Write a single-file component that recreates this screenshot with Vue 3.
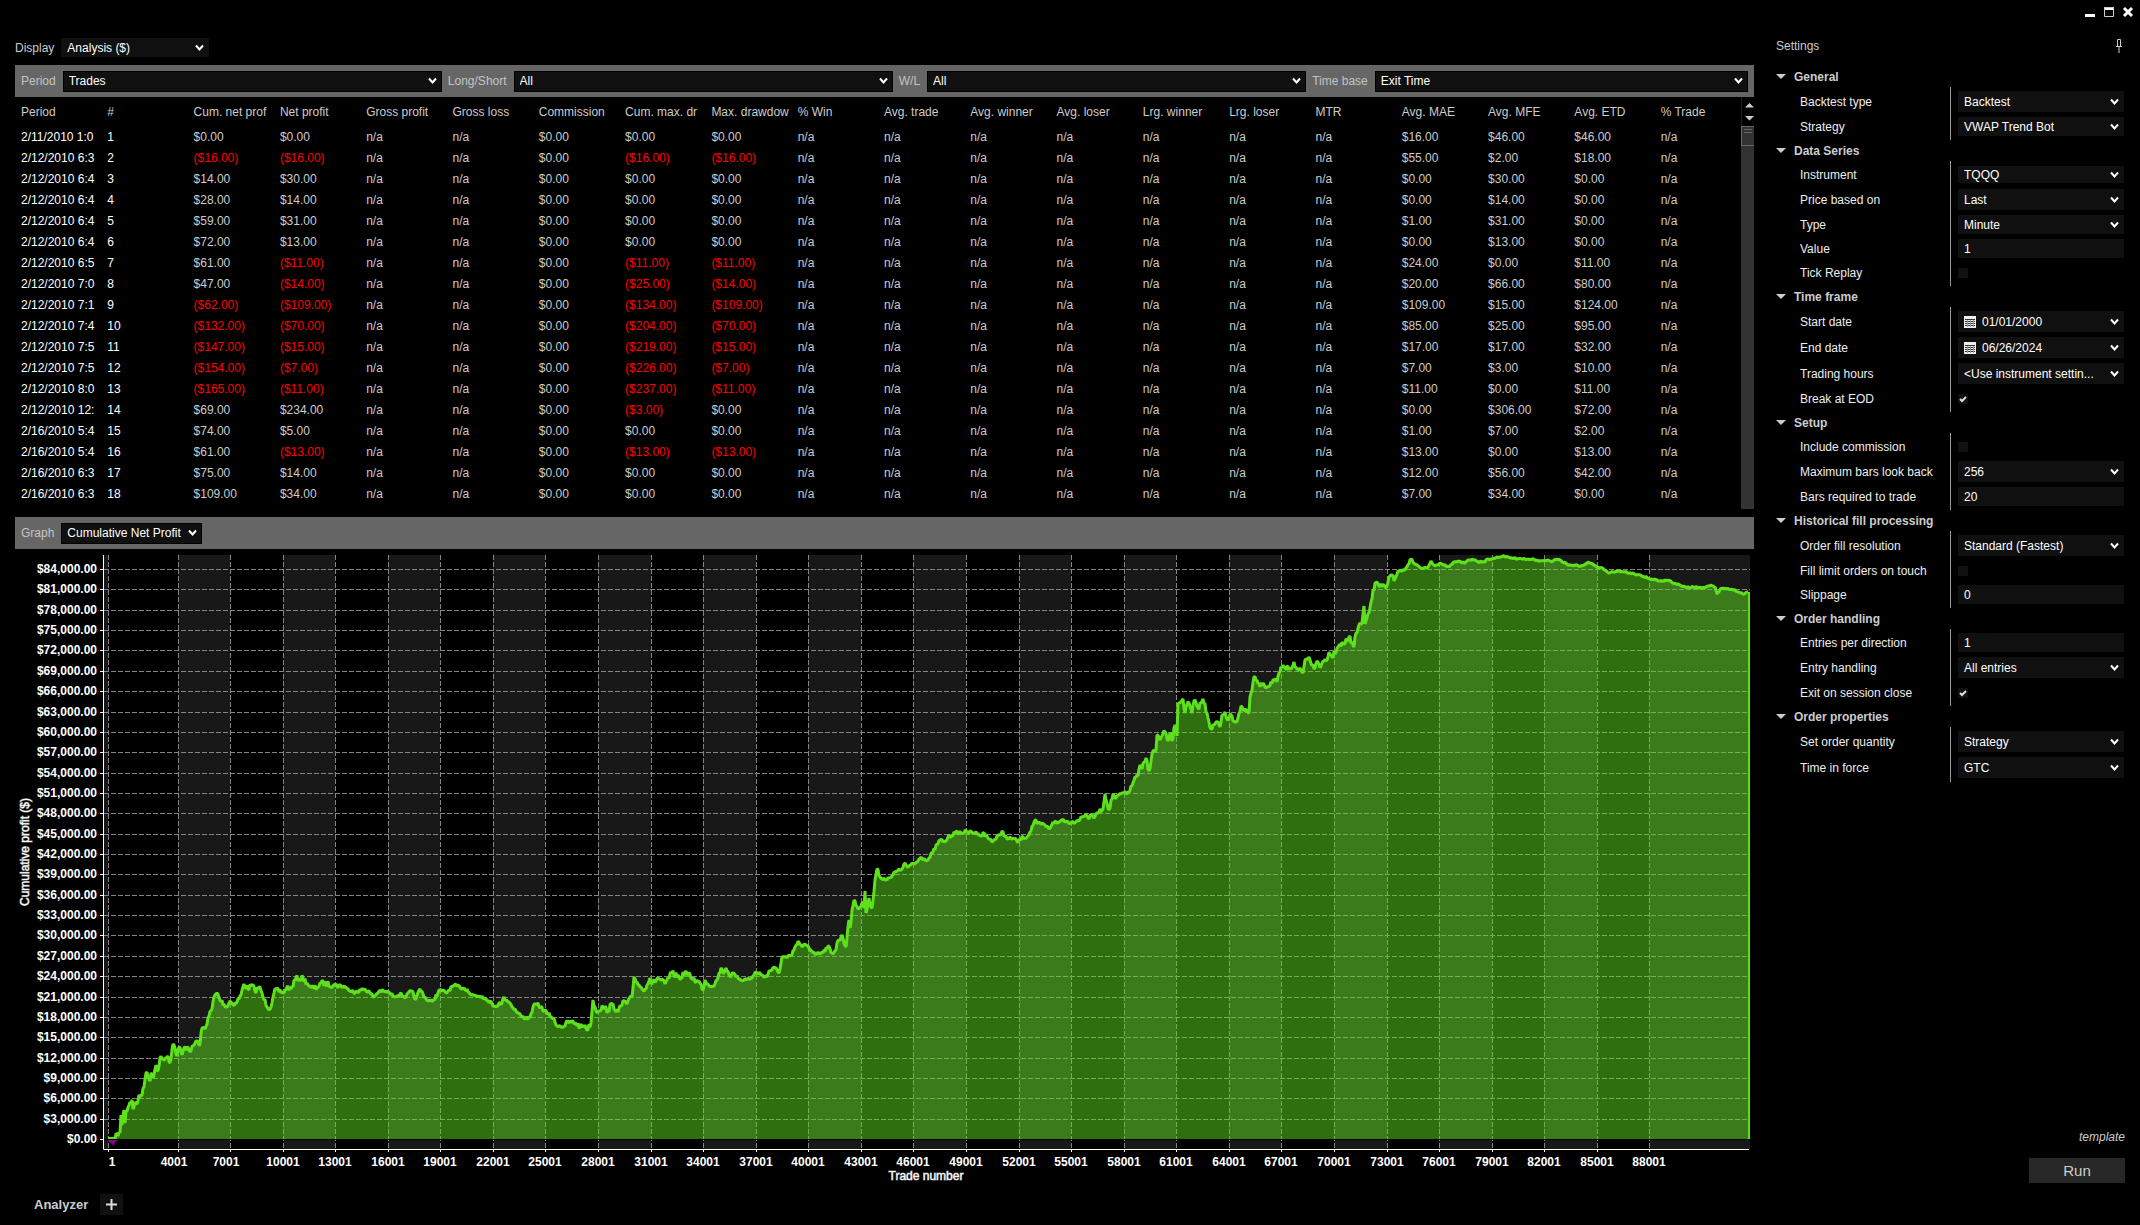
<script setup>
const toolbar = [
  { id: 'period', label: 'Period', value: 'Trades' },
  { id: 'side', label: 'Long/Short', value: 'All' },
  { id: 'wl', label: 'W/L', value: 'All' },
  { id: 'timebase', label: 'Time base', value: 'Exit Time' },
]

const columns = [
  'Period', '#', 'Cum. net prof', 'Net profit', 'Gross profit', 'Gross loss', 'Commission',
  'Cum. max. dr', 'Max. drawdow', '% Win', 'Avg. trade', 'Avg. winner', 'Avg. loser',
  'Lrg. winner', 'Lrg. loser', 'MTR', 'Avg. MAE', 'Avg. MFE', 'Avg. ETD', '% Trade',
]

// period, cumulative net, net, cumulative max drawdown, max drawdown, MAE, MFE, ETD
const trades = [
  ['2/11/2010 1:0', 0, 0, 0, 0, 16, 46, 46],
  ['2/12/2010 6:3', -16, -16, -16, -16, 55, 2, 18],
  ['2/12/2010 6:4', 14, 30, 0, 0, 0, 30, 0],
  ['2/12/2010 6:4', 28, 14, 0, 0, 0, 14, 0],
  ['2/12/2010 6:4', 59, 31, 0, 0, 1, 31, 0],
  ['2/12/2010 6:4', 72, 13, 0, 0, 0, 13, 0],
  ['2/12/2010 6:5', 61, -11, -11, -11, 24, 0, 11],
  ['2/12/2010 7:0', 47, -14, -25, -14, 20, 66, 80],
  ['2/12/2010 7:1', -62, -109, -134, -109, 109, 15, 124],
  ['2/12/2010 7:4', -132, -70, -204, -70, 85, 25, 95],
  ['2/12/2010 7:5', -147, -15, -219, -15, 17, 17, 32],
  ['2/12/2010 7:5', -154, -7, -226, -7, 7, 3, 10],
  ['2/12/2010 8:0', -165, -11, -237, -11, 11, 0, 11],
  ['2/12/2010 12:', 69, 234, -3, 0, 0, 306, 72],
  ['2/16/2010 5:4', 74, 5, 0, 0, 1, 7, 2],
  ['2/16/2010 5:4', 61, -13, -13, -13, 13, 0, 13],
  ['2/16/2010 6:3', 75, 14, 0, 0, 12, 56, 42],
  ['2/16/2010 6:3', 109, 34, 0, 0, 7, 34, 0],
]

const money = (n) => (n < 0 ? `($${(-n).toFixed(2)})` : `$${n.toFixed(2)}`)
const rows = trades.map(([period, cum, net, cumDd, dd, mae, mfe, etd], i) => [
  period, String(i + 1), money(cum), money(net), 'n/a', 'n/a', money(0), money(cumDd), money(dd),
  'n/a', 'n/a', 'n/a', 'n/a', 'n/a', 'n/a', 'n/a', money(mae), money(mfe), money(etd), 'n/a',
])

const groups = [
  { title: 'General', items: [
    { label: 'Backtest type', kind: 'select', value: 'Backtest' },
    { label: 'Strategy', kind: 'select', value: 'VWAP Trend Bot', size: 'mid' },
  ] },
  { title: 'Data Series', items: [
    { label: 'Instrument', kind: 'select', value: 'TQQQ', size: 'low' },
    { label: 'Price based on', kind: 'select', value: 'Last' },
    { label: 'Type', kind: 'select', value: 'Minute', size: 'mid' },
    { label: 'Value', kind: 'text', value: '1' },
    { label: 'Tick Replay', kind: 'check', value: false },
  ] },
  { title: 'Time frame', items: [
    { label: 'Start date', kind: 'date', value: '01/01/2000' },
    { label: 'End date', kind: 'date', value: '06/26/2024' },
    { label: 'Trading hours', kind: 'select', value: '<Use instrument settin...' },
    { label: 'Break at EOD', kind: 'check', value: true },
  ] },
  { title: 'Setup', items: [
    { label: 'Include commission', kind: 'check', value: false },
    { label: 'Maximum bars look back', kind: 'select', value: '256' },
    { label: 'Bars required to trade', kind: 'text', value: '20' },
  ] },
  { title: 'Historical fill processing', items: [
    { label: 'Order fill resolution', kind: 'select', value: 'Standard (Fastest)' },
    { label: 'Fill limit orders on touch', kind: 'check', value: false },
    { label: 'Slippage', kind: 'text', value: '0' },
  ] },
  { title: 'Order handling', items: [
    { label: 'Entries per direction', kind: 'text', value: '1' },
    { label: 'Entry handling', kind: 'select', value: 'All entries' },
    { label: 'Exit on session close', kind: 'check', value: true },
  ] },
  { title: 'Order properties', items: [
    { label: 'Set order quantity', kind: 'select', value: 'Strategy' },
    { label: 'Time in force', kind: 'select', value: 'GTC' },
  ] },
]
const fieldId = (label) => label.toLowerCase().replace(/[^a-z]+/g, '-')

// ---- chart ----
const plot = { left: 103, right: 1750, top: 555, zero: 1139, bottom: 1149 }

const yTicks = Array.from({ length: 29 }, (_, i) => ({
  label: `$${(i * 3000).toLocaleString('en-US')}.00`,
  y: Math.floor(1139.5 - i * 20.355),
}))

const xTicks = [
  { label: '1', x: 108, tx: 112 },
  ...Array.from({ length: 29 }, (_, k) => {
    const x = Math.floor(178 + k * 52.571)
    return { label: String(4001 + k * 3000), x, tx: k < 2 ? x - 4 : x }
  }),
]

const bands = [
  { x: 104, w: 4 },
  ...Array.from({ length: 15 }, (_, i) => {
    const x = xTicks[1 + i * 2].x
    return { x, w: (i < 14 ? xTicks[2 + i * 2].x : plot.right) - x }
  }),
]

const equity = [
  115,1139,117,1134,120,1133,121,1115,122,1125,124,1110,125,1123,126,1112,129,1105,132,1100,133,1109,
  135,1102,137,1104,139,1095,141,1096,144,1087,146,1073,147,1072,150,1081,151,1074,153,1078,156,1065,
  158,1071,160,1058,162,1059,168,1056,170,1063,173,1044,175,1048,177,1056,179,1047,182,1055,184,1048,
  188,1047,191,1051,196,1041,200,1044,202,1028,205,1029,208,1018,212,1009,214,997,217,993,220,1000,
  227,1007,230,1001,233,1004,237,1002,241,995,244,984,248,989,252,985,255,991,259,987,262,993,264,1000,
  270,1009,273,997,276,989,279,992,283,993,287,987,291,989,296,978,299,979,303,978,307,983,311,988,
  317,988,320,983,335,985,346,987,351,992,357,991,365,989,370,993,374,997,379,991,388,992,393,996,
  400,994,406,997,411,991,416,999,420,989,426,999,432,1002,440,990,446,993,453,986,460,987,467,989,
  471,995,482,996,488,1000,494,1006,502,1003,504,997,509,1002,516,1011,522,1017,530,1018,533,1007,
  537,1004,547,1013,553,1018,556,1025,565,1026,568,1022,576,1023,580,1027,585,1025,587,1030,591,1023,
  593,1000,596,1011,603,1007,608,1011,612,1004,618,1012,624,1001,627,1004,632,997,634,977,637,982,
  643,990,647,985,650,978,652,984,658,978,665,984,672,973,681,978,685,972,692,978,700,983,703,990,
  705,980,707,984,713,986,717,980,721,968,723,973,726,968,731,977,733,973,736,977,744,980,752,978,
  756,972,762,975,767,977,769,971,775,968,779,973,782,957,787,958,792,955,795,947,799,942,802,947,
  806,945,812,951,817,954,827,949,828,946,832,953,836,950,837,943,841,937,843,938,846,947,848,927,
  849,920,850,928,852,910,855,901,858,909,862,903,864,908,865,891,866,913,868,903,869,898,872,908,
  873,900,875,880,877,869,880,877,883,880,890,877,897,871,901,870,904,864,908,867,917,862,921,857,
  928,860,933,852,940,840,945,842,948,837,955,833,967,832,978,833,982,836,983,833,988,838,993,841,
  1000,835,1002,831,1007,839,1013,838,1018,842,1023,837,1027,837,1030,832,1035,820,1037,824,1045,825,
  1049,829,1053,822,1058,823,1063,819,1067,822,1073,822,1080,819,1086,814,1089,819,1092,814,1094,818,
  1098,812,1103,809,1105,794,1107,803,1109,810,1113,794,1115,798,1123,793,1127,794,1132,786,1135,777,
  1138,776,1140,765,1142,769,1146,758,1149,771,1153,751,1156,750,1157,735,1160,740,1165,732,1168,741,
  1170,733,1172,741,1175,725,1177,736,1178,703,1183,699,1185,713,1188,702,1192,713,1194,701,1198,708,
  1201,703,1203,699,1207,713,1211,729,1217,722,1220,727,1222,715,1225,712,1228,720,1231,715,1235,722,
  1238,718,1241,706,1244,711,1249,713,1250,697,1252,690,1254,677,1260,687,1263,683,1267,687,1273,680,
  1277,682,1280,672,1283,665,1286,670,1290,668,1294,662,1296,667,1303,673,1305,660,1309,657,1311,663,
  1315,668,1318,662,1321,666,1327,660,1329,652,1332,657,1338,647,1344,644,1349,637,1354,647,1356,633,
  1359,625,1362,623,1364,606,1365,624,1367,618,1371,602,1373,590,1377,582,1379,586,1387,586,1390,576,
  1395,579,1398,571,1405,570,1411,559,1415,564,1423,569,1428,567,1431,561,1435,566,1440,563,1449,567,
  1454,562,1458,561,1464,563,1472,559,1478,562,1484,562,1488,559,1493,559,1498,557,1504,556,1510,558,
  1532,559,1539,561,1553,561,1559,559,1569,565,1582,566,1588,562,1597,567,1602,568,1609,573,1619,571,
  1630,573,1642,576,1652,579,1660,581,1668,580,1674,583,1686,587,1704,588,1711,585,1715,587,1717,594,
  1721,588,1735,590,1743,594,1748,592,
]

// Fill in the trade-by-trade jitter between the sampled points.
function jitter(x) {
  if (x < 340) return 3
  if (x < 560) return 2
  if (x < 700) return 3
  if (x < 840) return 2
  if (x < 880) return 4
  if (x < 1140) return 2
  if (x < 1395) return 3
  return 1
}
function buildCurve() {
  let seed = 7
  const rand = () => {
    seed = (seed * 16807) % 2147483647
    return seed / 2147483647
  }
  const pts = []
  for (let i = 0; i < equity.length - 2; i += 2) {
    const [x0, y0, x1, y1] = equity.slice(i, i + 4)
    for (let x = x0; x < x1; x++) {
      const y = y0 + ((y1 - y0) * (x - x0)) / (x1 - x0)
      const n = x === x0 ? 0 : (rand() * 2 - 1) * jitter(x)
      pts.push(`${x} ${Math.min(plot.zero, y + n).toFixed(1)}`)
    }
  }
  pts.push('1748 592')
  return pts.join('L')
}
const curve = buildCurve()
const linePath = `M${curve}`
const areaPath = `M115 1139L${curve}V1139Z`
</script>

<template>
  <div class="window">
    <header class="titlebar">
      <button class="win" type="button" aria-label="Minimize">
        <svg width="12" height="12" viewBox="0 0 12 12"><path d="M1 8h10v3H1z" fill="#fff" /></svg>
      </button>
      <button class="win" type="button" aria-label="Maximize">
        <svg width="12" height="12" viewBox="0 0 12 12"><path d="M1 1h10v3H1z" fill="#fff" /><path d="M1.500 1.500h9v9h-9z" fill="none" stroke="#ccc" /></svg>
      </button>
      <button class="win" type="button" aria-label="Close">
        <svg width="12" height="12" viewBox="0 0 12 12"><path d="M2 2l8 8M10 2l-8 8" stroke="#fff" stroke-width="3" /></svg>
      </button>
    </header>

    <div class="columns">
      <main class="main">
        <div class="display">
          <label for="display">Display</label>
          <span class="pick mid display-pick">
            <select id="display"><option>Analysis ($)</option></select>
            <svg class="chev" width="9" height="8" viewBox="0 0 9 8"><path d="M1 1.500l3.500 4 3.500-4" /></svg>
          </span>
        </div>

        <div class="bar">
          <template v-for="t in toolbar" :key="t.id">
            <label :for="t.id">{{ t.label }}</label>
            <span class="pick boxed grow">
              <select :id="t.id"><option>{{ t.value }}</option></select>
              <svg class="chev" width="9" height="8" viewBox="0 0 9 8"><path d="M1 1.500l3.500 4 3.500-4" /></svg>
            </span>
          </template>
        </div>

        <div class="grid">
          <table>
            <thead>
              <tr><th v-for="c in columns" :key="c" scope="col">{{ c }}</th></tr>
            </thead>
            <tbody>
              <tr v-for="(r, i) in rows" :key="i">
                <td v-for="(c, j) in r" :key="j" :class="{ neg: c[0] === '(', key: j < 2 }">{{ c }}</td>
              </tr>
            </tbody>
          </table>
          <div class="scroll">
            <div class="arrows">
              <svg width="9" height="18" viewBox="0 0 9 18"><path d="M0 4.500L4.500 0 9 4.500zM0 13h9L4.500 17.500z" fill="#ccc" /></svg>
            </div>
            <div class="track"><div class="thumb"></div></div>
          </div>
        </div>

        <div class="bar">
          <label for="graph">Graph</label>
          <span class="pick boxed graph-pick">
            <select id="graph"><option>Cumulative Net Profit</option></select>
            <svg class="chev" width="9" height="8" viewBox="0 0 9 8"><path d="M1 1.500l3.500 4 3.500-4" /></svg>
          </span>
        </div>

        <svg class="chart" viewBox="15 549 1739 641" role="img" aria-label="Cumulative net profit by trade number">
          <rect v-for="b in bands" :key="b.x" :x="b.x" :y="plot.top" :width="b.w" :height="plot.bottom - plot.top" fill="#181818" />
          <g class="gridlines">
            <line v-for="t in yTicks.slice(1)" :key="t.y" :x1="104" :x2="plot.right" :y1="t.y + 0.5" :y2="t.y + 0.5" />
            <line v-for="t in xTicks" :key="t.x" :x1="t.x + 0.5" :x2="t.x + 0.5" :y1="plot.top" :y2="plot.bottom" />
          </g>
          <path class="area" :d="areaPath" />
          <path class="curve" :d="linePath" />
          <path class="edge" d="M1749 592V1139M108 1138h7" />
          <path d="M104 1139.500H1750" stroke="#000" />
          <path d="M108 1140h10l-3 2-1 4-2-2-4-3z" fill="#8a008a" />
          <path class="axis" d="M103.500 555V1149.500H1749" />
          <g class="axis">
            <line v-for="t in yTicks" :key="t.y" x1="100" x2="103" :y1="t.y + 0.5" :y2="t.y + 0.5" />
            <line v-for="t in xTicks" :key="t.x" :x1="t.x + 0.5" :x2="t.x + 0.5" y1="1150" y2="1152" />
          </g>
          <g class="labels">
            <text v-for="t in yTicks" :key="t.y" x="97" :y="t.y + 4" text-anchor="end">{{ t.label }}</text>
            <text v-for="t in xTicks" :key="t.x" :x="t.tx" y="1166" text-anchor="middle">{{ t.label }}</text>
          </g>
          <g class="titles">
            <text x="926" y="1180" text-anchor="middle">Trade number</text>
            <text transform="translate(29 852) rotate(-90)" text-anchor="middle">Cumulative profit ($)</text>
          </g>
        </svg>

        <footer class="tabs">
          <span class="tab">Analyzer</span>
          <button class="add" type="button" aria-label="Add tab">
            <svg width="11" height="11" viewBox="0 0 11 11"><path d="M5.500 0v11M0 5.500h11" stroke="#ddd" stroke-width="2" /></svg>
          </button>
        </footer>
      </main>

      <aside class="settings">
        <div class="settings-head">
          <span>Settings</span>
          <svg width="8" height="14" viewBox="0 0 8 14"><path d="M2.500 7V.5h3V7M1 7.500h6M4 8v6" fill="none" stroke="#ccc" /></svg>
        </div>

        <section v-for="g in groups" :key="g.title">
          <h3>
            <svg width="10" height="5" viewBox="0 0 10 5"><path d="M0 0h10L5 5z" fill="#ccc" /></svg>
            {{ g.title }}
          </h3>
          <div class="props">
            <div v-for="p in g.items" :key="p.label" class="prop">
              <label :for="fieldId(p.label)">{{ p.label }}</label>
              <span v-if="p.kind === 'select'" class="pick" :class="p.size">
                <select :id="fieldId(p.label)"><option>{{ p.value }}</option></select>
                <svg class="chev" width="9" height="8" viewBox="0 0 9 8"><path d="M1 1.500l3.500 4 3.500-4" /></svg>
              </span>
              <span v-else-if="p.kind === 'date'" class="pick date">
                <input :id="fieldId(p.label)" type="text" :value="p.value">
                <svg class="cal" width="12" height="12" viewBox="0 0 12 12">
                  <path d="M0 0h12v12H0z" fill="#eee" />
                  <path d="M1 3.500h10M1 5.500h10M1 7.500h10M1 9.500h10" stroke="#333" />
                  <path d="M3.500 4v7M6.500 4v7M9.500 4v7" stroke="#999" />
                </svg>
                <svg class="chev" width="9" height="8" viewBox="0 0 9 8"><path d="M1 1.500l3.500 4 3.500-4" /></svg>
              </span>
              <span v-else-if="p.kind === 'text'" class="pick mid">
                <input :id="fieldId(p.label)" type="text" :value="p.value">
              </span>
              <span v-else class="tick">
                <input :id="fieldId(p.label)" type="checkbox" :checked="p.value">
                <svg v-if="p.value" width="10" height="10" viewBox="0 0 10 10"><path d="M2 5l2 2 4-4" fill="none" stroke="#ddd" stroke-width="2" /></svg>
              </span>
            </div>
          </div>
        </section>

        <div class="actions">
          <a href="#">template</a>
          <button class="run" type="button">Run</button>
        </div>
      </aside>
    </div>
  </div>
</template>

<style>
body {
  background: #000;
}
</style>

<style scoped>
.window {
  min-height: 100vh;
  display: flex;
  flex-direction: column;
  background: #000;
  color: #ccc;
  font-family: "Liberation Sans", Arial, sans-serif;
  font-size: 12px;
  line-height: 16px;
}
.window * {
  box-sizing: border-box;
}
.window svg {
  display: block;
}
button,
select,
input {
  margin: 0;
  padding: 0;
  border: 0;
  border-radius: 0;
  font: inherit;
  color: inherit;
  appearance: none;
}

.titlebar {
  display: flex;
  justify-content: flex-end;
  gap: 7px;
  height: 26px;
  padding: 6px 6px 0 0;
}
.win {
  width: 12px;
  height: 12px;
  background: none;
}

.columns {
  flex: 1;
  display: flex;
}
.main {
  flex: 1;
  min-width: 0;
  padding: 12px 0 0 15px;
  display: flex;
  flex-direction: column;
}

.pick {
  position: relative;
  display: block;
  height: 21px;
  background: #101010;
  color: #fff;
}
.pick.mid {
  height: 19px;
}
.pick.low {
  height: 17px;
}
.pick.boxed {
  border: 1px solid #000;
}
.pick select,
.pick input {
  display: block;
  width: 100%;
  height: 100%;
  padding: 0 6px;
  background: none;
}
.pick.boxed select {
  padding-left: 5px;
}
.pick.date input {
  padding-left: 24px;
}
.chev {
  position: absolute;
  right: 5px;
  top: calc(50% - 4px);
  fill: none;
  stroke: #fff;
  stroke-width: 2;
  pointer-events: none;
}
.pick.boxed .chev {
  right: 4px;
}
.cal {
  position: absolute;
  left: 6px;
  top: 5px;
}

.display {
  display: flex;
  align-items: center;
  gap: 7px;
  height: 19px;
  margin-bottom: 8px;
}
.display-pick {
  width: 148px;
}

.bar {
  display: flex;
  align-items: center;
  gap: 6px;
  height: 32px;
  padding: 0 6px;
  background: #666;
}
.bar label {
  margin-right: 1px;
  color: #c4c4c4;
}
.grow {
  flex: 379;
}
.grow:last-child {
  flex: 373;
}
.graph-pick {
  width: 141px;
}

.grid {
  display: flex;
  height: 412px;
  margin-bottom: 8px;
}
table {
  flex: 1;
  width: 100%;
  height: max-content;
  table-layout: fixed;
  border-collapse: separate;
  border-spacing: 0;
}
th,
td {
  height: 21px;
  padding: 0 6px;
  text-align: left;
  font-weight: normal;
  white-space: nowrap;
}
th {
  height: 29px;
}
.key {
  color: #fff;
}
.neg {
  color: #f00;
}
.scroll {
  flex: none;
  width: 13px;
  display: flex;
  flex-direction: column;
}
.arrows {
  height: 29px;
  padding: 6px 0 0 3px;
  border-left: 1px solid #222;
}
.track {
  flex: 1;
  background: #333;
}
.thumb {
  height: 20px;
  border: 1px solid #666;
  border-right: 0;
  background:
    linear-gradient(#666, #666) 2px 2px / 8px 1px no-repeat,
    linear-gradient(#666, #666) 2px 5px / 8px 1px no-repeat,
    #333;
}

.chart {
  width: 100%;
  height: auto;
}
.gridlines line {
  stroke: #848484;
  stroke-dasharray: 5 2;
}
.area {
  fill: #5ede1e;
  fill-opacity: 0.5;
}
.curve {
  fill: none;
  stroke: #5fe01c;
  stroke-width: 3;
  stroke-linejoin: bevel;
}
.edge {
  stroke: #5fe01c;
  stroke-width: 2;
}
.axis {
  fill: none;
  stroke: #fff;
}
.labels text {
  font-size: 12px;
  font-weight: bold;
  fill: #fff;
}
.titles text {
  font-size: 12px;
  fill: #fff;
  stroke: #fff;
  stroke-width: 1px;
  stroke-opacity: 0.5;
}

.tabs {
  display: flex;
  align-items: center;
  gap: 12px;
  height: 29px;
  padding-left: 19px;
}
.tab {
  font-size: 13px;
  font-weight: bold;
}
.add {
  display: grid;
  place-items: center;
  width: 23px;
  height: 21px;
  background: #101010;
}

.settings {
  flex: none;
  width: 386px;
  display: flex;
  flex-direction: column;
  padding-bottom: 42px;
}
.settings-head {
  display: flex;
  align-items: center;
  justify-content: space-between;
  height: 40px;
  padding: 0 17px 0 22px;
}
h3 {
  display: flex;
  align-items: center;
  gap: 8px;
  height: 21px;
  margin: 0;
  padding-left: 22px;
  font-size: 12px;
  font-weight: bold;
}
.props {
  display: flex;
  flex-direction: column;
  gap: 5px;
  padding: 4px 16px 4px 46px;
  background: linear-gradient(#999, #999) 196px 0 / 1px 100% no-repeat;
}
.prop {
  display: grid;
  grid-template-columns: 158px 1fr;
  align-items: center;
  min-height: 19px;
  color: #fff;
}
.prop label {
  color: #eee;
}
.tick {
  position: relative;
  width: 10px;
  height: 10px;
}
.tick input {
  display: block;
  width: 10px;
  height: 10px;
  background: #111;
}
.tick svg {
  position: absolute;
  inset: 0;
  pointer-events: none;
}
.actions {
  display: flex;
  flex-direction: column;
  align-items: flex-end;
  gap: 12px;
  margin-top: auto;
  padding-right: 15px;
}
.actions a {
  color: #ccc;
  font-style: italic;
  line-height: 18px;
  text-decoration: none;
}
.run {
  width: 96px;
  height: 25px;
  background: #282828;
  color: #ccc;
  font-size: 15px;
}
</style>
